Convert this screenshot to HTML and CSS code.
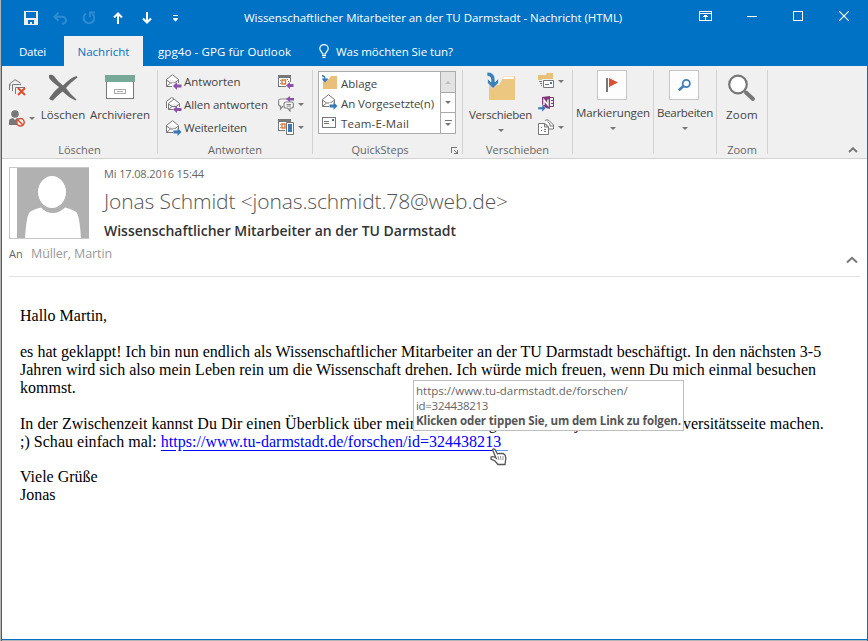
FILE: index.html
```html
<!DOCTYPE html>
<html lang="de">
<head>
<meta charset="utf-8">
<title>Nachricht (HTML)</title>
<link rel="stylesheet" href="styles.css">
</head>
<body>
<div class="window">
  <header class="titlebar">
    <div class="quick-access">
      <svg width="14" height="14" viewBox="0 0 14 14" shape-rendering="crispEdges"><path fill="#f0f0f0" fill-rule="evenodd" d="M0 0H14V14H0ZM2 1V7H12V1ZM4 9V13H6V11H8V13H10V9Z"/></svg>
      <svg width="14" height="13" viewBox="0 0 14 13" fill="none" stroke="#2f8bd3" stroke-width="2"><path d="M5.500 .7 1.500 4.700 5.500 8.700M2 4.700H9Q13 4.700 13 8.500 13 11 9 12"/></svg>
      <svg width="14" height="14" viewBox="0 0 14 14" fill="none" stroke="#2f8bd3" stroke-width="2"><path d="M4 2.500A5.300 5.300 0 1 0 10.500 3M8 6V1.500H13"/></svg>
      <svg width="10" height="12" viewBox="0 0 10 12" fill="none" stroke="#fff" stroke-width="2"><path d="M5 12V1.500M1 5.500 5 1.500 9 5.500"/></svg>
      <svg width="10" height="12" viewBox="0 0 10 12" fill="none" stroke="#fff" stroke-width="2"><path d="M5 0V10.500M1 6.500 5 10.500 9 6.500"/></svg>
      <svg width="5" height="7" viewBox="0 0 5 7" fill="#fff"><path d="M0 0H5V1H0ZM0 3H5V4L2.500 6.500 0 4Z"/></svg>
    </div>
    <span class="t title">Wissenschaftlicher Mitarbeiter an der TU Darmstadt - Nachricht (HTML)</span>
    <div class="controls">
      <svg class="display-options" width="13" height="10" viewBox="0 0 13 10" fill="none" stroke="#fff" shape-rendering="crispEdges"><path d="M.5 .5H12.500V9.500H.5ZM0 2.500H13M6.500 9V4M4 5.500H9M5 4.500H8"/></svg>
      <svg width="10" height="10" viewBox="0 0 10 10" stroke="#fff" shape-rendering="crispEdges"><path d="M0 5.500H10"/></svg>
      <svg width="10" height="10" viewBox="0 0 10 10" fill="none" stroke="#fff" shape-rendering="crispEdges"><path d="M.5 .5H9.500V9.500H.5Z"/></svg>
      <svg width="10" height="10" viewBox="0 0 10 10" stroke="#fff" stroke-width="1.100"><path d="M0 0 10 10M10 0 0 10"/></svg>
    </div>
  </header>

  <nav class="tabs">
    <div class="tab file"><span class="t t-file">Datei</span></div>
    <div class="tab active"><span class="t">Nachricht</span></div>
    <div class="tab gpg"><span class="t t-gpg">gpg4o - GPG für Outlook</span></div>
    <div class="tab tell">
      <svg width="10" height="14" viewBox="0 0 10 14" fill="none" stroke="#fff" stroke-width="1.200"><path d="M3.500 10C3.500 8 .8 7 .8 4.500A4.200 3.900 0 0 1 9.200 4.500C9.200 7 6.500 8 6.500 10ZM3 11.500H7M3.500 13.400H6.500"/></svg>
      <span class="t t-tell">Was möchten Sie tun?</span>
    </div>
  </nav>

  <section class="ribbon">
    <div class="group g-delete">
      <div class="body">
        <div class="small-col">
          <svg width="17" height="17" viewBox="0 0 17 17" fill="none" stroke="#7a7a7a"><path d="M.5 11V5L6 .7 11.500 4M.5 9.500V6H2M3.500 12V5.500H12M6.500 15V8.500H16"/><path stroke="#d8502f" stroke-width="2" d="M9 9 16 16M16 9 9 16"/></svg>
          <div class="with-arrow">
            <svg width="16" height="17" viewBox="0 0 16 17"><circle cx="6" cy="4" r="3.800" fill="#777"/><path fill="#777" d="M0 15V11Q0 8.500 4 8L6 10 8 8Q11 8.500 11 11V15Z"/><circle cx="11.500" cy="12.300" r="3.700" fill="#f0f0f0" stroke="#d8502f" stroke-width="1.500"/><path stroke="#d8502f" stroke-width="1.500" d="M9 10 14 15"/></svg>
            <i class="arrow"></i>
          </div>
        </div>
        <div class="big b-del">
          <svg width="30" height="28" viewBox="0 0 30 28"><path fill="#6b6b6b" d="M1 1Q4 0 6 2 10 8 15 11.500 22 4 28.500 2L29.500 3.500Q22 9 18 14 22 20 28.500 25.500L27.500 26.500Q20 23 14.500 17.500 8 23 5 26.500 3 27 1 24.500 5 18 11 13 4 8 1 4Z"/></svg>
          <span class="t">Löschen</span>
        </div>
        <div class="big b-arc">
          <svg width="30" height="28" viewBox="0 0 30 28" shape-rendering="crispEdges"><path fill="#fff" stroke="#777" d="M1.500 7H28.500V24.500H1.500Z"/><path fill="#77a898" d="M0 1H30V8H0Z"/><path fill="none" stroke="#aaa" d="M9.500 15.500H20.500V19.500H9.500ZM12 17.500H18"/></svg>
          <span class="t t-arc">Archivieren</span>
        </div>
      </div>
      <div class="caption"><span class="t">Löschen</span></div>
    </div>

    <div class="group g-reply">
      <div class="body">
        <div class="rows">
          <div class="row"><svg width="16" height="16" viewBox="0 0 16 16"><path fill="#fff" stroke="#777" d="M.5 12.500V5.500L6.500 .7 12.500 5.500V12.500ZM.5 6 4.500 9H8.500L12.500 6M.5 12.500 4.500 9M8.500 9 12 12"/><path fill="#f0f0f0" d="M6 9H16V16H6Z"/><path fill="#8b50ab" d="M7 12 11 8V10.500H15.500V13.500H11V16Z"/></svg><span class="t">Antworten</span></div>
          <div class="row"><svg width="16" height="16" viewBox="0 0 16 16"><path fill="#fff" stroke="#777" d="M.5 11V4.500L5.500 .5 8 1.500M2.500 12.500V6.500L8 2 13.500 6.500V12.500ZM2.500 7 6 9.500H10L13.500 7M2.500 12.500 6 9.500"/><path fill="#f0f0f0" d="M7 10H16V16H7Z"/><path fill="#8b50ab" d="M7 12.500 11 9V11H15.500V14H11V16Z"/></svg><span class="t r-all">Allen antworten</span></div>
          <div class="row"><svg width="16" height="16" viewBox="0 0 16 16"><path fill="#fff" stroke="#777" d="M.5 12.500V5.500L6.500 .7 12.500 5.500V12.500ZM.5 6 4.500 9H8.500L12.500 6M.5 12.500 4.500 9M8.500 9 12 12"/><path fill="#f0f0f0" d="M7 9H16V16H7Z"/><path fill="#3c79b4" d="M15.500 12 11.500 8V10.500H7.500V13.500H11.500V16Z"/></svg><span class="t r-fwd">Weiterleiten</span></div>
        </div>
        <div class="icon-col">
          <div class="with-arrow"><svg width="16" height="15" viewBox="0 0 16 15"><path fill="#fff" d="M1 3H13V12H1Z"/><path fill="#777" d="M0 1H13V4H0ZM0 4H1V13H0ZM12 4H13V8H12ZM0 12H8V13H0Z"/><path fill="#888" d="M2 6H3V7H2ZM2 9H3V10H2ZM9 5H10V6H9ZM10 7H11V8H10Z"/><path fill="#fff" stroke="#e0772f" stroke-width="1.400" d="M4 6H7.500V10H4Z"/><path fill="#8b50ab" d="M8 11.500 12 8V10H15.500V13H12V15Z"/></svg></div>
          <div class="with-arrow"><svg width="16" height="16" viewBox="0 0 16 16" fill="#f8f8f8" stroke="#888" stroke-width="1.200"><path d="M9 3H2Q.6 3 .6 5V8Q.6 10 2.500 10V13L5 10"/><path d="M8 6H13.500Q15.400 6 15.400 8V10Q15.400 12 13.500 12H12V15L9.500 12H8Q6 12 6 10V8Q6 6 8 6ZM8.500 8.500H13M8.500 10H13"/><path fill="#8b50ab" stroke="none" d="M8 3 12 0V2H16V4.500H12V6Z"/></svg><i class="arrow"></i></div>
          <div class="with-arrow"><svg width="16" height="16" viewBox="0 0 16 16"><path fill="#fff" d="M1 3H13V11H1Z"/><path fill="#777" d="M0 0H13V3H0ZM0 3H1V12H0ZM0 11H7V12H0Z"/><path fill="#999" d="M2 5H3V6H2ZM2 8H3V9H2Z"/><path fill="#fff" stroke="#e0772f" stroke-width="1.400" d="M4 5H7V9H4Z"/><path fill="#fff" stroke="#777" d="M8.500 3.500H15.500V15.500H8.500Z"/><path fill="#3c79b4" d="M10 5H14V13H10Z"/></svg><i class="arrow"></i></div>
        </div>
      </div>
      <div class="caption"><span class="t">Antworten</span></div>
    </div>

    <div class="group g-quick">
      <div class="body">
        <div class="gallery">
          <div class="g-list">
            <div class="g-item"><svg width="16" height="15" viewBox="0 0 16 15"><path fill="#e8c07a" d="M1 4H7L9 1H15V14H1Z"/><path fill="none" stroke="#3c79b4" stroke-width="1.600" d="M0 .8Q3 .8 3 5M.5 3.500 3 6.200 5.500 3.500"/></svg><span class="t">Ablage</span></div>
            <div class="g-item"><svg width="16" height="16" viewBox="0 0 16 16"><path fill="#fff" stroke="#777" d="M.5 12.500V5.500L6.500 .7 12.500 5.500V12.500ZM.5 6 4.500 9H8.500L12.500 6M.5 12.500 4.500 9M8.500 9 12 12"/><path fill="#fff" d="M7 9H16V16H7Z"/><path fill="#3c79b4" d="M15.500 12 11.500 8V10.500H7.500V13.500H11.500V16Z"/></svg><span class="t q-boss">An Vorgesetzte(n)</span></div>
            <div class="g-item"><svg class="mail" width="14" height="11" viewBox="0 0 14 11" shape-rendering="crispEdges"><path fill="#fff" stroke="#777" d="M.5 .5H13.500V10.500H.5ZM2 4.500H7M2 6.500H7"/><path fill="#3c79b4" d="M10 2H12V4H10Z"/></svg><span class="t q-team">Team-E-Mail</span></div>
          </div>
          <div class="g-scroll">
            <div class="s-up"><i class="arrow up"></i></div>
            <div class="s-down"><i class="arrow"></i></div>
            <div class="s-more"><i class="bar"></i><i class="arrow"></i></div>
          </div>
        </div>
      </div>
      <div class="caption"><span class="t">QuickSteps</span>
        <svg class="launcher" width="7" height="7" viewBox="0 0 7 7" fill="none" stroke="#777" shape-rendering="crispEdges"><path d="M.5 6V.5H6M3 3 6 6M6.500 3V6.500H3"/></svg>
      </div>
    </div>

    <div class="group g-move">
      <div class="body">
        <div class="big b-move">
          <svg width="30" height="30" viewBox="0 0 30 30"><path fill="#ecc77f" d="M3 14H13L18 5H29V29H3Z"/><path fill="#fff" d="M18 5.500H28V8H16.500Z"/><path fill="#3f7fb8" stroke="#f0f0f0" stroke-width=".7" d="M1 1Q9 1 9 9V11L12.500 7.500V12L7 17.500 1.500 12V7.500L5 11V9Q5 5 1 5Z"/></svg>
          <span class="t t-move">Verschieben</span>
          <i class="arrow"></i>
        </div>
        <div class="icon-col">
          <div class="with-arrow"><svg width="16" height="16" viewBox="0 0 16 16"><path fill="#e8c07a" d="M0 2H8L9 0H15V7H0Z"/><path fill="#f0f0f0" d="M4 6H16V16H4Z"/><path fill="#fff" stroke="#777" d="M5.500 7.500H15.500V14.500H5.500Z"/><path fill="#777" d="M1 8H4V9H1ZM2 10H4V11H2ZM3 12H4V13H3ZM7 11H11V12H7Z"/><path fill="#3c79b4" d="M12 9H14V11H12Z"/></svg><i class="arrow"></i></div>
          <div class="with-arrow"><svg width="16" height="16" viewBox="0 0 16 16"><path fill="#80397b" d="M4 1 12 0V13L4 11Z"/><path fill="none" stroke="#80397b" d="M12 1.500H15.500V10.500H12M13 4.500H15M13 7.500H15"/><path fill="none" stroke="#fff" stroke-width="1.400" d="M6 9V4L10 9V3.500"/><path fill="#3c79b4" stroke="#f0f0f0" stroke-width=".4" d="M8 12 4 8.500V11H0V13.500H4V16Z"/></svg></div>
          <div class="with-arrow"><svg width="16" height="16" viewBox="0 0 16 16" fill="#fff" stroke="#777"><path d="M7 1.500Q9 0 11 1.500L15.500 6V10H10.500V8L7 4.500"/><path d="M.5 4.500H6.500L10.500 8V15.500H.5ZM9.500 2.500 12 5V7H15M6.500 4.500V8H10.500M3 8.500H4M6 10.500H8M3 11.500H4M6 12.500H8"/></svg><i class="arrow"></i></div>
        </div>
      </div>
      <div class="caption"><span class="t">Verschieben</span></div>
    </div>

    <div class="group g-tags"><div class="boxed">
      <div class="box"><svg width="12" height="14" viewBox="0 0 12 14"><path fill="#777" d="M0 0H2V14H0Z"/><path fill="#d8502f" d="M3 0 12 4.500 3 9Z"/></svg></div>
      <span class="t t-tags">Markierungen</span><i class="arrow"></i>
    </div></div>

    <div class="group g-edit"><div class="boxed">
      <div class="box"><svg width="13" height="13" viewBox="0 0 13 13" fill="none" stroke="#3f7fb8"><circle cx="8.300" cy="4.500" r="3.600" stroke-width="1.700"/><path stroke-width="2.600" d="M5.500 7 .8 11.200"/></svg></div>
      <span class="t t-edit">Bearbeiten</span><i class="arrow"></i>
    </div></div>

    <div class="group g-zoom">
      <div class="body"><div class="big b-zoom">
        <svg width="28" height="28" viewBox="0 0 28 28"><circle cx="10" cy="10.500" r="8.800" fill="#fff" stroke="#777" stroke-width="2.200"/><path stroke="#777" stroke-width="4" stroke-linecap="round" d="M18 18.500 25 25"/></svg>
        <span class="t t-zoom">Zoom</span>
      </div></div>
      <div class="caption"><span class="t">Zoom</span></div>
    </div>
    <svg class="collapse" width="10" height="6" viewBox="0 0 10 6" fill="none" stroke="#777" stroke-width="2"><path d="M1 5 5 1.300 9 5"/></svg>
  </section>

  <section class="mail-head">
    <div class="sender">
      <div class="avatar"><svg width="72" height="72" viewBox="0 0 72 72"><path fill="#b1b1b1" d="M0 0H72V72H0Z"/><ellipse cx="35" cy="25" rx="14" ry="16" fill="#fff"/><path fill="#fff" d="M8 72Q9 52 12 46 14 43 24 40.500 29 46 36 46 42 46 48 40.500 58 43 60 46 63 52 64 72Z"/></svg></div>
      <div class="who">
        <span class="t date">Mi 17.08.2016 15:44</span>
        <span class="t from">Jonas Schmidt &lt;jonas.schmidt.78@web.de&gt;</span>
        <span class="t subject">Wissenschaftlicher Mitarbeiter an der TU Darmstadt</span>
      </div>
    </div>
    <div class="to">
      <span class="t an">An</span><span class="t rcpt">Müller, Martin</span>
      <svg width="12" height="8" viewBox="0 0 12 8" fill="none" stroke="#777" stroke-width="2"><path d="M1 6.500 6 1.800 11 6.500"/></svg>
    </div>
  </section>

  <main class="message">
    <p>Hallo Martin,</p>
    <p class="wide">es hat geklappt! Ich bin nun endlich als Wissenschaftlicher Mitarbeiter an der TU Darmstadt beschäftigt. In den nächsten 3-5<br>Jahren wird sich also mein Leben rein um die Wissenschaft drehen. Ich würde mich freuen, wenn Du mich einmal besuchen<br>kommst.</p>
    <p class="wide tight">In der Zwischenzeit kannst Du Dir einen Überblick über meine Forschung und die Projekte auf der Universitätsseite machen.<br>;) Schau einfach mal: <span class="link"><a>https://www.tu-darmstadt.de/forschen/id=324438213</a><svg class="hand" width="18" height="18" viewBox="0 0 18 18"><path fill="#fff" stroke="#555" stroke-width="1.300" d="M6 10 2.500 1.800Q3.500 .2 5 1.500L7.500 6 9 5.300 11 5.500 13 5.500 15 7Q16.500 10 15.500 13L15 16.500H8L5 13 1 11V9Q3 7.800 6 10Z"/><path fill="none" stroke="#999" d="M8 8 9 12M10.500 8 11 12M13 8V12"/></svg></span></p>
    <p>Viele Grüße<br>Jonas</p>
    <div class="tooltip">
      <span class="t">https://www.tu-darmstadt.de/forschen/</span>
      <span class="t tip-id">id=324438213</span>
      <span class="t tip-hint">Klicken oder tippen Sie, um dem Link zu folgen.</span>
    </div>
  </main>
</div>
</body>
</html>
```

FILE: styles.css
```css
* { box-sizing: border-box; }
body { margin: 0; background: #fff; font-family: "Open Sans", "Noto Sans", sans-serif; font-size: 11.5px; color: #444; }
svg { display: block; flex: none; }
.t { white-space: nowrap; }

.window { width: 868px; height: 641px; overflow: hidden; border: 1px solid #0072c6; border-width: 0 1px 0 0; position: relative; background: #fff; box-shadow: inset 1px 0 #b5b5b5, inset 2px 0 #0072c6, inset 0 -1px #b5b5b5, inset 0 -2px #0072c6; padding-left: 2px; }

.titlebar { height: 36px; margin-left: -1px; background: #0072c6; display: flex; align-items: center; color: #fff; }
.quick-access { display: grid; grid-template-columns: repeat(6, 29px); justify-items: center; align-items: center; margin-left: 15px; width: 228px; }
.controls { display: grid; grid-template-columns: repeat(4, 46px); justify-items: center; margin: 0 0 4px auto; }
.display-options { margin-right: 2px; }
.title { margin-bottom: 2px; letter-spacing: -0.04px; }

.tabs { height: 30px; margin-left: -1px; background: #0072c6; color: #fff; display: flex; }
.tab { display: flex; align-items: center; justify-content: center; }
.file { width: 63px; }
.active { width: 79px; background: #f0f0f0; color: #0072c6; }
.gpg { width: 163px; }
.tell { gap: 7px; margin-left: 13px; }
.t-file { letter-spacing: -0.24px; }
.t-gpg { letter-spacing: 0.1px; }
.t-tell { letter-spacing: -0.05px; }

.ribbon { height: 93px; background: #f0f0f0; border-bottom: 1px solid #d2d2d2; display: flex; padding: 4px 0; position: relative; }
.group { height: 84px; border-right: 1px solid #d2d2d2; display: flex; flex-direction: column; flex: none; }
.g-delete { width: 156px; }
.g-reply { width: 155px; }
.g-quick { width: 150px; }
.g-move { width: 110px; }
.g-tags { width: 81px; }
.g-edit { width: 63px; }
.g-zoom { width: 51px; }
.body { height: 71px; flex: none; display: flex; }
.caption { height: 17px; flex: none; line-height: 17px; font-size: 11px; text-align: center; color: #666; position: relative; }
.g-quick .caption { padding-right: 15px; }
.launcher { position: absolute; right: 4px; top: 6px; }
.arrow { width: 0; height: 0; border: 3px solid transparent; border-top-color: #777; border-bottom: 0; flex: none; }
.arrow.up { transform: rotate(180deg); border-top-color: #bbb; }

.small-col { padding: 9px 0 0 7px; width: 36px; display: flex; flex-direction: column; gap: 14px; }
.with-arrow { display: flex; align-items: center; gap: 4px; height: 16px; }
.big { display: flex; flex-direction: column; align-items: center; line-height: 16px; }
.b-del { width: 50px; padding-top: 4px; gap: 5px; }
.b-arc { width: 64px; padding-top: 4px; gap: 5px; }
.b-move { width: 75px; padding-top: 1px; gap: 6px; }
.b-zoom { width: 50px; padding-top: 4px; gap: 5px; }
.t-arc { letter-spacing: -0.07px; }
.t-move { letter-spacing: -0.27px; }
.t-tags { letter-spacing: -0.12px; }
.t-edit { letter-spacing: -0.3px; }
.t-zoom { letter-spacing: 0.2px; }

.rows { padding: 0 0 0 8px; width: 120px; }
.row { display: flex; align-items: center; gap: 2px; height: 23px; }
.r-all { letter-spacing: -0.09px; }
.r-fwd { letter-spacing: -0.18px; }
.icon-col { display: flex; flex-direction: column; gap: 7px; padding-top: 3px; }

.gallery { width: 138px; height: 63px; margin: 1px 0 0 5px; border: 1px solid #ababab; background: #fff; display: flex; }
.g-list { flex: 1; }
.g-item { display: flex; align-items: center; gap: 3px; height: 20px; padding-left: 3px; }
.g-item .t { margin-top: 3px; }
.g-item .mail { margin-right: 2px; }
.q-boss { letter-spacing: -0.08px; }
.q-team { letter-spacing: 0.17px; }
.g-scroll { width: 15px; border-left: 1px solid #ababab; display: grid; grid-template-rows: 20px 20px 21px; }
.g-scroll > div { display: flex; flex-direction: column; align-items: center; justify-content: center; gap: 2px; }
.s-up { background: #e3e3e3; }
.s-down, .s-more { border-top: 1px solid #ababab; }
.bar { width: 7px; height: 1px; background: #777; }

.boxed { display: flex; flex-direction: column; align-items: center; line-height: 16px; }
.box { width: 30px; height: 30px; border: 1px solid #c6c6c6; background: #fdfdfd; display: flex; align-items: center; justify-content: center; margin: 0 2px 5px 0; }
.boxed .arrow { margin-top: 6px; }
.collapse { position: absolute; right: 9px; bottom: 5px; }

.mail-head { height: 118px; margin: 0 7px; border-bottom: 1px solid #e1e1e1; padding-top: 8px; }
.sender { display: flex; height: 72px; }
.avatar { width: 80px; border: solid #c8c8c8; border-width: 1px 0 1px 1px; padding-left: 7px; display: flex; align-items: center; overflow: hidden; }
.who { margin-left: 15px; display: flex; flex-direction: column; align-items: flex-start; }
.date { font-size: 11px; line-height: 14px; letter-spacing: -0.133px; color: #666; }
.from { font-size: 21px; font-weight: 300; line-height: 28px; margin-top: 6px; letter-spacing: -0.116px; color: #555; }
.subject { font-size: 14px; font-weight: 600; line-height: 20px; margin-top: 6px; letter-spacing: -0.011px; color: #333; }
.to { display: flex; align-items: center; height: 28px; }
.an { font-size: 11px; color: #666; width: 22px; }
.rcpt { font-size: 12.5px; letter-spacing: -0.1px; color: #999; }
.to svg { margin: 13px 2px 0 auto; }

.message { position: relative; padding: 30px 0 0 18px; font: 16px/18px "Liberation Serif", serif; color: #000; white-space: nowrap; }
.message p { margin: 0 0 18px; }
.message .wide { letter-spacing: 0.018px; }
.message .tight { line-height: 17.5px; }
.link { position: relative; }
.link a { color: #00f; text-decoration: underline; text-underline-offset: 3px; }
.link::after { content: ""; position: absolute; left: 98%; top: 17px; width: 14px; height: 1px; background: #5b9bff; }
.hand { position: absolute; right: -7px; top: 15px; z-index: 1; }

.tooltip { position: absolute; left: 411px; top: 103px; width: 271px; height: 51px; background: #fff; border: 1px solid #bebebe; padding: 2px; display: flex; flex-direction: column; align-items: flex-start; font: 11.5px/15px "Open Sans", sans-serif; color: #666; }
.tip-id { letter-spacing: -0.3px; }
.tip-hint { font-weight: 700; letter-spacing: -0.13px; color: #555; }
```
